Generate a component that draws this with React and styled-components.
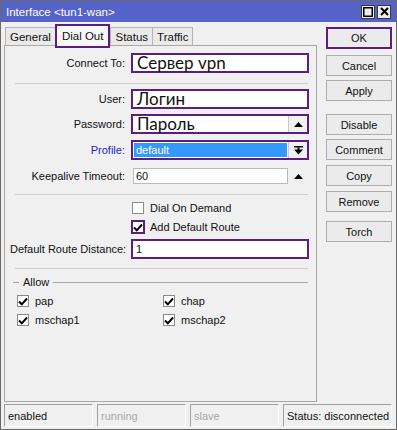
import styled, { createGlobalStyle } from "styled-components";

const GlobalStyle = createGlobalStyle`
  html, body {
    margin: 0;
    padding: 0;
    background: #f0f0f0;
  }
  * {
    box-sizing: border-box;
  }
`;

const purple = "#5b1d7e";

const Window = styled.div`
  width: 397px;
  height: 430px;
  display: flex;
  flex-direction: column;
  background: #f0f0f0;
  border: 1px solid #6a6a6a;
  font-family: "Liberation Sans", Arial, sans-serif;
  font-size: 11px;
  color: #111;
  overflow: hidden;
`;

const TitleBar = styled.div`
  height: 21px;
  flex: none;
  display: flex;
  align-items: center;
  padding: 0 5px 0 5px;
  background: #5563c9;
  color: #fff;
  font-size: 11.5px;
`;

const Title = styled.span`
  flex: 1;
`;

const TitleButton = styled.div`
  width: 14px;
  height: 14px;
  margin-left: 2px;
  background: #ececec;
  border: 1px solid #3a3a3a;
  display: flex;
  align-items: center;
  justify-content: center;
`;

const Body = styled.div`
  flex: 1;
  display: flex;
  padding: 2px 0 0 3px;
`;

const LeftPane = styled.div`
  width: 313px;
  display: flex;
  flex-direction: column;
`;

const Tabs = styled.div`
  display: flex;
  height: 21px;
  align-items: flex-end;
  position: relative;
  z-index: 1;
  margin-left: 1px;
`;

const Tab = styled.div`
  height: ${(p) => (p.$active ? "24px" : "18px")};
  padding: 0 ${(p) => (p.$active ? "5px" : "4px")};
  display: flex;
  align-items: center;
  margin-bottom: ${(p) => (p.$active ? "-3px" : "0")};
  border: ${(p) => (p.$active ? `2px solid ${purple}` : "1px solid #b4b4b4")};
  border-bottom: ${(p) => (p.$active ? `2px solid ${purple}` : "none")};
  background: ${(p) => (p.$active ? "#f7f7f7" : "#eaeaea")};
  margin-right: ${(p) => (p.$active ? "0" : "-1px")};
  font-size: 11.5px;
`;

const Panel = styled.div`
  flex: 1;
  border: 1px solid #a8a8a8;
  background: #f0f0f0;
  display: flex;
  flex-direction: column;
  padding: 7px 6px 0 5px;
  margin-bottom: 2px;
`;

const Row = styled.div`
  display: flex;
  align-items: center;
  height: ${(p) => p.$h || 20}px;
  margin-top: ${(p) => p.$mt || 0}px;
`;

const Label = styled.div`
  width: 121px;
  text-align: right;
  padding-right: 6px;
  white-space: nowrap;
  color: ${(p) => (p.$blue ? "#2323c8" : "#111")};
`;

const FieldBox = styled.div`
  width: 178px;
  height: 100%;
  display: flex;
  border: ${(p) => (p.$hl ? `2px solid ${purple}` : "1px solid transparent")};
  padding: ${(p) => (p.$hl ? "0" : "1px")};
`;

const Input = styled.div`
  flex: 1;
  height: 100%;
  background: #fff;
  border: 1px solid ${(p) => (p.$hl ? "transparent" : "#b9b9b9")};
  display: flex;
  align-items: center;
  padding-left: ${(p) => (p.$big ? 3 : 2)}px;
  font-family: ${(p) =>
    p.$big ? 'Lato, "Liberation Sans", sans-serif' : "inherit"};
  font-size: ${(p) => (p.$big ? "17px" : "11px")};
  line-height: ${(p) => (p.$big ? "14px" : "normal")};
  color: #111;
  white-space: nowrap;
`;

const Selected = styled.div`
  flex: 1;
  height: 100%;
  display: flex;
  align-items: center;
  background: #3399ff;
  color: #fff;
  padding-left: 2px;
  border: 1px solid #fff;
`;

const SpinButton = styled.div`
  width: 19px;
  height: 100%;
  display: flex;
  align-items: center;
  justify-content: center;
  background: #f0f0f0;
  border-left: 1px solid ${(p) => (p.$line ? "#c8c8c8" : "transparent")};
`;

const Separator = styled.div`
  height: 1px;
  background: #d0d0d0;
  margin: ${(p) => p.$mt || 0}px 2px 0 5px;
`;

const CheckRow = styled.label`
  display: flex;
  align-items: center;
  gap: 6px;
  height: ${(p) => p.$h || 14}px;
  margin-top: ${(p) => p.$mt || 0}px;
  padding-left: ${(p) => p.$pl || 0}px;
`;

const CheckBox = styled.span`
  width: ${(p) => (p.$hl ? 14 : 12)}px;
  height: ${(p) => (p.$hl ? 14 : 12)}px;
  margin-left: ${(p) => (p.$hl ? -1 : 0)}px;
  margin-right: ${(p) => (p.$hl ? -1 : 0)}px;
  border: ${(p) => (p.$hl ? `2px solid ${purple}` : "1px solid #8a8a8a")};
  background: #fff;
  display: flex;
  align-items: center;
  justify-content: center;
  flex: none;
`;

const Group = styled.div`
  display: flex;
  align-items: center;
  margin-top: 7px;
  padding: 0 2px 0 3px;
  gap: 4px;
`;

const GroupLine = styled.div`
  height: 1px;
  background: #a8a8a8;
  flex: ${(p) => (p.$short ? "none" : 1)};
  width: ${(p) => (p.$short ? "6px" : "auto")};
`;

const CheckGrid = styled.div`
  display: grid;
  grid-template-columns: 146px 140px;
  row-gap: 5px;
  padding-left: 7px;
  margin-top: 6px;
`;

const RightPane = styled.div`
  flex: 1;
  display: flex;
  flex-direction: column;
  align-items: flex-end;
  padding: 3px 4px 0 0;
`;

const Button = styled.div`
  width: 66px;
  height: ${(p) => (p.$hl ? 22 : 21)}px;
  margin-top: ${(p) => p.$mt || 0}px;
  border: ${(p) => (p.$hl ? `2px solid ${purple}` : "1px solid #adadad")};
  background: #ebebeb;
  display: flex;
  align-items: center;
  justify-content: center;
`;

const StatusBar = styled.div`
  height: 25px;
  flex: none;
  display: flex;
  gap: 4px;
  padding: 0 4px 2px 3px;
`;

const StatusField = styled.div`
  width: ${(p) => p.$w}px;
  flex: ${(p) => (p.$grow ? 1 : "none")};
  height: 100%;
  border-top: 1px solid #a0a0a0;
  border-left: 1px solid #a0a0a0;
  border-right: 1px solid #fff;
  border-bottom: 1px solid #fff;
  display: flex;
  align-items: center;
  padding-left: 3px;
  font-size: 11px;
  color: ${(p) => (p.$dim ? "#a8a8a8" : "#111")};
  white-space: nowrap;
`;

const Tick = () => (
  <svg width="10" height="9" viewBox="0 0 10 9">
    <path d="M1 4.5 L3.8 7.3 L9 1.5" fill="none" stroke="#000" strokeWidth="2" />
  </svg>
);

const UpArrow = () => (
  <svg width="9" height="5" viewBox="0 0 9 5">
    <path d="M0 5 L4.5 0 L9 5 Z" fill="#000" />
  </svg>
);

const DropArrow = () => (
  <svg width="9" height="9" viewBox="0 0 9 9">
    <rect x="0" y="0" width="9" height="1.5" fill="#000" />
    <path d="M0 3.5 L9 3.5 L4.5 8.5 Z" fill="#000" />
    <rect x="3.5" y="1.5" width="2" height="3" fill="#000" />
  </svg>
);

const CheckItem = ({ label, checked, hl, mt, pl }) => (
  <CheckRow $mt={mt} $pl={pl}>
    <CheckBox $hl={hl}>{checked && <Tick />}</CheckBox>
    <span>{label}</span>
  </CheckRow>
);

export default function App() {
  return (
    <>
      <GlobalStyle />
      <Window>
        <TitleBar>
          <Title>Interface &lt;tun1-wan&gt;</Title>
          <TitleButton>
            <svg width="10" height="10" viewBox="0 0 10 10">
              <rect x="0.75" y="0.75" width="8.5" height="8.5" fill="none" stroke="#000" strokeWidth="1.5" />
            </svg>
          </TitleButton>
          <TitleButton>
            <svg width="9" height="9" viewBox="0 0 9 9">
              <path d="M1 1 L8 8 M8 1 L1 8" stroke="#000" strokeWidth="2" />
            </svg>
          </TitleButton>
        </TitleBar>
        <Body>
          <LeftPane>
            <Tabs>
              <Tab>General</Tab>
              <Tab $active>Dial Out</Tab>
              <Tab>Status</Tab>
              <Tab>Traffic</Tab>
            </Tabs>
            <Panel>
              <Row>
                <Label>Connect To:</Label>
                <FieldBox $hl>
                  <Input $hl $big>Сервер vpn</Input>
                </FieldBox>
              </Row>
              <Separator $mt={10} />
              <Row $mt={5}>
                <Label>User:</Label>
                <FieldBox $hl>
                  <Input $hl $big>Логин</Input>
                </FieldBox>
              </Row>
              <Row $mt={5}>
                <Label>Password:</Label>
                <FieldBox $hl>
                  <Input $hl $big>Пароль</Input>
                  <SpinButton $line>
                    <UpArrow />
                  </SpinButton>
                </FieldBox>
              </Row>
              <Row $mt={6}>
                <Label $blue>Profile:</Label>
                <FieldBox $hl>
                  <Selected>default</Selected>
                  <SpinButton $line>
                    <DropArrow />
                  </SpinButton>
                </FieldBox>
              </Row>
              <Row $mt={6}>
                <Label>Keepalive Timeout:</Label>
                <FieldBox>
                  <Input>60</Input>
                  <SpinButton>
                    <UpArrow />
                  </SpinButton>
                </FieldBox>
              </Row>
              <Separator $mt={8} />
              <CheckItem label="Dial On Demand" mt={6} pl={122} />
              <CheckItem label="Add Default Route" checked hl mt={5} pl={122} />
              <Row $mt={5}>
                <Label>Default Route Distance:</Label>
                <FieldBox $hl>
                  <Input $hl>1</Input>
                </FieldBox>
              </Row>
              <Separator $mt={9} />
              <Group>
                <GroupLine $short />
                <span>Allow</span>
                <GroupLine />
              </Group>
              <CheckGrid>
                <CheckItem label="pap" checked />
                <CheckItem label="chap" checked />
                <CheckItem label="mschap1" checked />
                <CheckItem label="mschap2" checked />
              </CheckGrid>
            </Panel>
          </LeftPane>
          <RightPane>
            <Button $hl>OK</Button>
            <Button $mt={6}>Cancel</Button>
            <Button $mt={4}>Apply</Button>
            <Button $mt={13}>Disable</Button>
            <Button $mt={4}>Comment</Button>
            <Button $mt={5}>Copy</Button>
            <Button $mt={5}>Remove</Button>
            <Button $mt={9}>Torch</Button>
          </RightPane>
        </Body>
        <StatusBar>
          <StatusField $w={89}>enabled</StatusField>
          <StatusField $w={89} $dim>running</StatusField>
          <StatusField $w={89} $dim>slave</StatusField>
          <StatusField $grow>Status: disconnected</StatusField>
        </StatusBar>
      </Window>
    </>
  );
}
